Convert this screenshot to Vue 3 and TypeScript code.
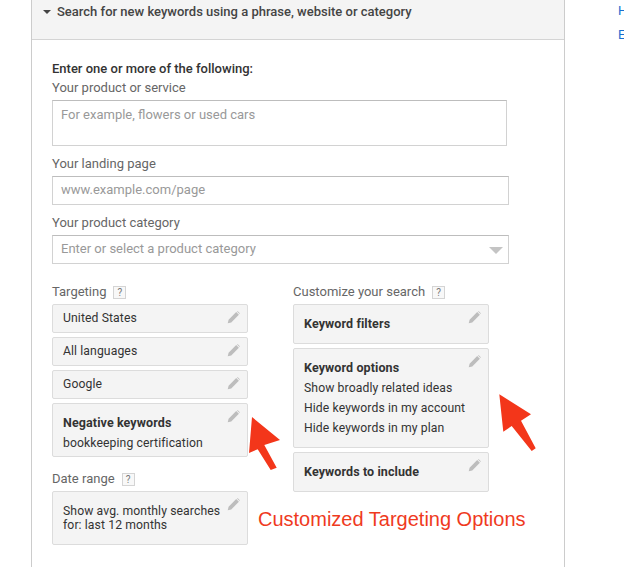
<template>
  <div class="page">
    <section class="panel">
      <header class="panel-head">
        <span class="caret"></span>
        <span>Search for new keywords using a phrase, website or category</span>
      </header>
      <div class="panel-body">
        <div class="intro">Enter one or more of the following:</div>
        <label class="field-label first">Your product or service</label>
        <div class="input textarea">For example, flowers or used cars</div>
        <label class="field-label">Your landing page</label>
        <div class="input single">www.example.com/page</div>
        <label class="field-label">Your product category</label>
        <div class="input select">
          <span class="select-text">Enter or select a product category</span>
          <span class="select-arrow"></span>
        </div>

        <div class="columns">
          <div class="col">
            <div class="col-title">Targeting <span class="help">?</span></div>
            <div v-for="card in targeting" :key="card.title" class="card" :class="card.kind">
              <div :class="{ strong: card.lines.length > 0 }">{{ card.title }}</div>
              <div v-for="line in card.lines" :key="line" class="line">{{ line }}</div>
              <svg class="pencil" viewBox="0 0 14 14"><path :d="pencilPath" /></svg>
            </div>
            <div class="col-title date">Date range <span class="help">?</span></div>
            <div class="card date-card">
              <div>Show avg. monthly searches</div>
              <div>for: last 12 months</div>
              <svg class="pencil" viewBox="0 0 14 14"><path :d="pencilPath" /></svg>
            </div>
          </div>
          <div class="col">
            <div class="col-title">Customize your search <span class="help">?</span></div>
            <div v-for="card in customize" :key="card.title" class="card" :class="card.kind">
              <div class="strong">{{ card.title }}</div>
              <div v-for="line in card.lines" :key="line" class="line">{{ line }}</div>
              <svg class="pencil" viewBox="0 0 14 14"><path :d="pencilPath" /></svg>
            </div>
          </div>
        </div>
      </div>
    </section>

    <div class="side-links">
      <a>H</a>
      <a>E</a>
    </div>

    <!-- annotations pasted over the screenshot -->
    <svg class="arrow arrow-left" viewBox="0 0 32 54"><path :d="arrowPath" /></svg>
    <svg class="arrow arrow-right" viewBox="0 0 38 58"><path :d="arrowPath2" /></svg>
    <div class="note">Customized Targeting Options</div>
  </div>
</template>

<script setup lang="ts">
interface OptionCard {
  title: string
  lines: string[]
  kind: string
}

const pencilPath = 'M9.9 1.2 12.8 4.1 4.6 12.3 .8 13.2 1.7 9.4Z M10.7.5 11.6.2 13.8 2.4 13.5 3.3Z';
const arrowPath = 'M3 1 31 24 15.3 29 27.7 51.7 21.7 54 8.7 33.3 0 37Z';
const arrowPath2 = 'M.3 .3 32 20.3 22 26.7 36.7 54.3 32.7 57 12.7 32 4.3 37.7Z';

const targeting: OptionCard[] = [
  { title: 'United States', lines: [], kind: 'short' },
  { title: 'All languages', lines: [], kind: 'short' },
  { title: 'Google', lines: [], kind: 'short' },
  { title: 'Negative keywords', lines: ['bookkeeping certification'], kind: 'neg' }
];

const customize: OptionCard[] = [
  { title: 'Keyword filters', lines: [], kind: 'tall' },
  {
    title: 'Keyword options',
    lines: ['Show broadly related ideas', 'Hide keywords in my account', 'Hide keywords in my plan'],
    kind: 'options'
  },
  { title: 'Keywords to include', lines: [], kind: 'tall' }
];
</script>

<style>
html, body {
  background: #fff;
  overflow: hidden;
}
</style>

<style scoped>
.page {
  position: relative;
  width: 624px;
  height: 567px;
  overflow: hidden;
  background: #fff;
  font-family: Roboto, "Liberation Sans", sans-serif;
  font-size: 13px;
  color: #333;
}
.panel {
  width: 534px;
  margin-left: 31px;
  border-left: 1px solid #ccc;
  border-right: 1px solid #ccc;
  box-sizing: border-box;
  min-height: 567px;
}
.panel-head {
  display: flex;
  align-items: flex-start;
  height: 40px;
  box-sizing: border-box;
  padding: 4px 0 0 11px;
  background: #f4f4f4;
  border-bottom: 1px solid #d4d4d4;
  color: #444;
  font-size: 13px;
  font-weight: 500;
  line-height: 16px;
}
.caret {
  width: 0;
  height: 0;
  margin: 6px 6px 0 0;
  border-left: 4px solid transparent;
  border-right: 4px solid transparent;
  border-top: 4px solid #444;
}
.panel-body {
  padding: 21px 0 0 20px;
}
.intro {
  line-height: 16px;
  font-weight: 500;
  color: #333;
}
.field-label {
  display: block;
  margin-top: 10px;
  color: #666;
  line-height: 16px;
}
.field-label.first {
  margin-top: 3px;
}
.input {
  box-sizing: border-box;
  margin-top: 4px;
  border: 1px solid #d2d2d2;
  border-top-color: #bdbdbd;
  color: #999;
  padding-left: 8px;
  background: #fff;
}
.textarea {
  width: 455px;
  height: 46px;
  padding-top: 6px;
  line-height: 16px;
}
.single {
  width: 457px;
  height: 29px;
  line-height: 26px;
}
.select {
  display: flex;
  justify-content: space-between;
  align-items: center;
  width: 457px;
  height: 29px;
  margin-top: 4px;
}
.select-text {
  margin-top: -2px;
}
.select-arrow {
  width: 0;
  height: 0;
  margin-right: 5px;
  margin-top: 2px;
  border-left: 7px solid transparent;
  border-right: 7px solid transparent;
  border-top: 7px solid #c4c4c4;
}
.columns {
  display: flex;
  gap: 45px;
  margin-top: 20px;
}
.col {
  width: 196px;
}
.col-title {
  display: flex;
  align-items: center;
  gap: 7px;
  height: 16px;
  margin-bottom: 4px;
  color: #666;
  line-height: 16px;
}
.col-title.date {
  margin-top: 14px;
}
.help {
  display: block;
  width: 11px;
  height: 11px;
  border: 1px solid #d4d4d4;
  background: #f8f8f8;
  color: #777;
  font-size: 10px;
  line-height: 11px;
  text-align: center;
}
.card {
  position: relative;
  box-sizing: border-box;
  width: 196px;
  margin-bottom: 4px;
  padding: 0 10px;
  background: #f4f4f4;
  border: 1px solid #dcdcdc;
  border-radius: 2px;
  color: #333;
  font-size: 12.2px;
  letter-spacing: 0.1px;
}
.strong {
  font-weight: 700;
  font-size: 12.5px;
}
.short {
  height: 29px;
  line-height: 27px;
}
.neg {
  height: 54px;
  padding-top: 9px;
  line-height: 20px;
}
.tall {
  height: 40px;
  padding-top: 9px;
  line-height: 20px;
}
.options {
  height: 100px;
  padding-top: 9px;
  line-height: 20px;
}
.date-card {
  height: 54px;
  padding-top: 12px;
  line-height: 14px;
}
.pencil {
  position: absolute;
  top: 6px;
  right: 7px;
  width: 13px;
  height: 13px;
  fill: #bdbdbd;
}
.side-links {
  position: absolute;
  left: 618px;
  top: 3px;
  display: flex;
  flex-direction: column;
  gap: 8px;
  color: #1a6fd0;
  line-height: 16px;
}
.arrow {
  position: absolute;
  fill: #f3361a;
}
.arrow-left {
  left: 249px;
  top: 416px;
  width: 32px;
  height: 54px;
}
.arrow-right {
  left: 499px;
  top: 394px;
  width: 38px;
  height: 58px;
}
.note {
  position: absolute;
  left: 258px;
  top: 507px;
  color: #ef3a1e;
  font-family: "Liberation Sans", Arial, sans-serif;
  font-size: 20px;
  line-height: 24px;
}
</style>
